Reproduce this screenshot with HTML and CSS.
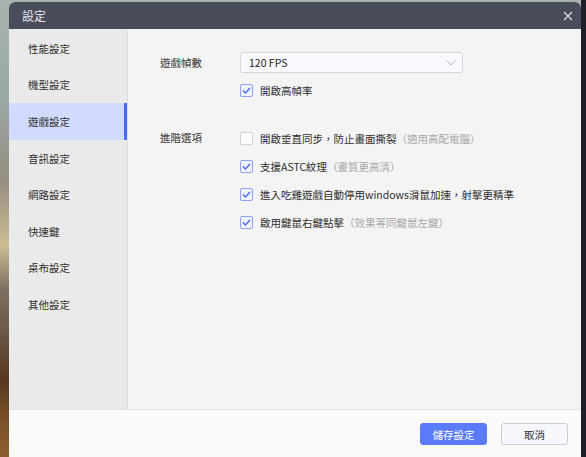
FILE: index.html
```html
<!DOCTYPE html>
<html lang="zh-Hant">
<head>
<meta charset="utf-8">
<title>設定</title>
<link rel="stylesheet" href="styles.css">
</head>
<body>
<div class="dialog">
  <div class="titlebar">
    <span class="title">設定</span>
    <svg class="close" width="10" height="10" viewBox="0 0 10 10"><path d="M1 1 L9 9 M9 1 L1 9" stroke="#dcdce2" stroke-width="1.2" fill="none"/></svg>
  </div>
  <div class="main">
    <nav class="sidebar">
      <div class="nav-item">性能設定</div>
      <div class="nav-item">機型設定</div>
      <div class="nav-item active">遊戲設定</div>
      <div class="nav-item">音訊設定</div>
      <div class="nav-item">網路設定</div>
      <div class="nav-item">快速鍵</div>
      <div class="nav-item">桌布設定</div>
      <div class="nav-item">其他設定</div>
    </nav>
    <section class="content">
      <div class="form-row">
        <div class="label label-select">遊戲幀數</div>
        <div class="field">
          <div class="select">
            <span>120 FPS</span>
            <svg width="10" height="6" viewBox="0 0 10 6"><path d="M0.5 0.5 L5 5 L9.5 0.5" stroke="#b4b6bd" stroke-width="1" fill="none"/></svg>
          </div>
          <label class="option first-option">
            <span class="box checked"><svg width="9" height="7" viewBox="0 0 9 7"><path d="M1 3.6 L3.4 6 L8 1" stroke="#4a6cf0" stroke-width="1.4" fill="none"/></svg></span>
            <span>開啟高幀率</span>
          </label>
        </div>
      </div>
      <div class="form-row adv">
        <div class="label label-option">進階選項</div>
        <div class="field">
          <label class="option">
            <span class="box"></span>
            <span>開啟垂直同步，防止畫面撕裂<span class="hint">（適用高配電腦）</span></span>
          </label>
          <label class="option">
            <span class="box checked"><svg width="9" height="7" viewBox="0 0 9 7"><path d="M1 3.6 L3.4 6 L8 1" stroke="#4a6cf0" stroke-width="1.4" fill="none"/></svg></span>
            <span>支援ASTC紋理<span class="hint">（畫質更高清）</span></span>
          </label>
          <label class="option">
            <span class="box checked"><svg width="9" height="7" viewBox="0 0 9 7"><path d="M1 3.6 L3.4 6 L8 1" stroke="#4a6cf0" stroke-width="1.4" fill="none"/></svg></span>
            <span>進入吃雞遊戲自動停用windows滑鼠加速，射擊更精準</span>
          </label>
          <label class="option">
            <span class="box checked"><svg width="9" height="7" viewBox="0 0 9 7"><path d="M1 3.6 L3.4 6 L8 1" stroke="#4a6cf0" stroke-width="1.4" fill="none"/></svg></span>
            <span>啟用鍵鼠右鍵點擊<span class="hint">（效果等同鍵鼠左鍵）</span></span>
          </label>
        </div>
      </div>
    </section>
  </div>
  <div class="footer">
    <button class="btn primary">儲存設定</button>
    <button class="btn">取消</button>
  </div>
</div>
</body>
</html>
```
FILE: styles.css
```css
* { box-sizing: border-box; }
html, body { margin: 0; padding: 0; }
body {
  width: 586px;
  height: 457px;
  overflow: hidden;
  font-family: "Noto Sans CJK TC", "Noto Sans", sans-serif;
  font-size: 10.5px;
  color: #333;
  padding-top: 2px;
  background:
    linear-gradient(to right, transparent 581px, #1d1e26 581px),
    linear-gradient(to bottom, #a9b4ae 0px, #9ba7a2 100px, #958e83 180px, #cbbd90 245px, #7d7060 290px, #6c5846 330px, #583820 380px, #7a5028 420px, #8a6030 457px);
}
.dialog {
  margin-left: 9px;
  width: 572px;
  height: 455px;
  display: flex;
  flex-direction: column;
  border-radius: 6px 6px 0 0;
  overflow: hidden;
  background: #fafafa;
}
.titlebar {
  height: 27px;
  flex: none;
  background: #494c5a;
  display: flex;
  align-items: center;
  justify-content: space-between;
  padding: 0 8px 0 13px;
}
.title {
  color: #e6e6ec;
  font-size: 12px;
}
.close { display: block; margin-top: 1px; }
.main {
  height: 381px;
  flex: none;
  display: flex;
  border-bottom: 1px solid #e2e2e2;
}
.sidebar {
  width: 119px;
  flex: none;
  background: #eaeaea;
  border-right: 1px solid #dddddd;
  padding-top: 1px;
}
.nav-item {
  height: 36.6px;
  display: flex;
  align-items: center;
  padding-left: 19px;
  color: #2e2e2e;
}
.nav-item.active {
  background: #d1dbff;
  border-right: 3px solid #4a6cf7;
}
.content {
  flex: 1;
  background: #f4f4f4;
  padding: 23px 0 0 32px;
}
.form-row {
  display: grid;
  grid-template-columns: 80px 1fr;
}
.form-row.adv { margin-top: 20px; }
.label { color: #333; }
.label-select { line-height: 21px; }
.label-option { line-height: 28px; }
.select {
  width: 223px;
  height: 21px;
  background: #f8f9fc;
  border: 1px solid #d2d5de;
  border-radius: 3px;
  display: flex;
  align-items: center;
  justify-content: space-between;
  padding: 0 6px 0 8px;
  color: #222;
}
.select svg { display: block; }
.option {
  height: 28px;
  display: flex;
  align-items: center;
  gap: 7px;
  color: #2e2e2e;
}
.first-option { margin-top: 3px; }
.box {
  width: 13px;
  height: 13px;
  flex: none;
  border: 1px solid #cfd1d8;
  background: #fdfdfd;
  border-radius: 2px;
  display: flex;
  align-items: center;
  justify-content: center;
}
.box.checked {
  border-color: #8fa2f3;
  background: #f0f3ff;
}
.box svg { display: block; }
.hint { color: #a8a8a8; }
.footer {
  flex: 1;
  background: #fafafa;
  display: flex;
  justify-content: flex-end;
  align-items: flex-start;
  gap: 14px;
  padding: 13px 13px 0 0;
}
.btn {
  width: 67px;
  height: 22px;
  font-family: inherit;
  font-size: 10.5px;
  border-radius: 3px;
  border: 1px solid #c9cdd8;
  background: #f7f8fc;
  color: #333;
  padding: 0;
}
.btn.primary {
  background: #5a7cfb;
  border-color: #5a7cfb;
  color: #fff;
}
```
